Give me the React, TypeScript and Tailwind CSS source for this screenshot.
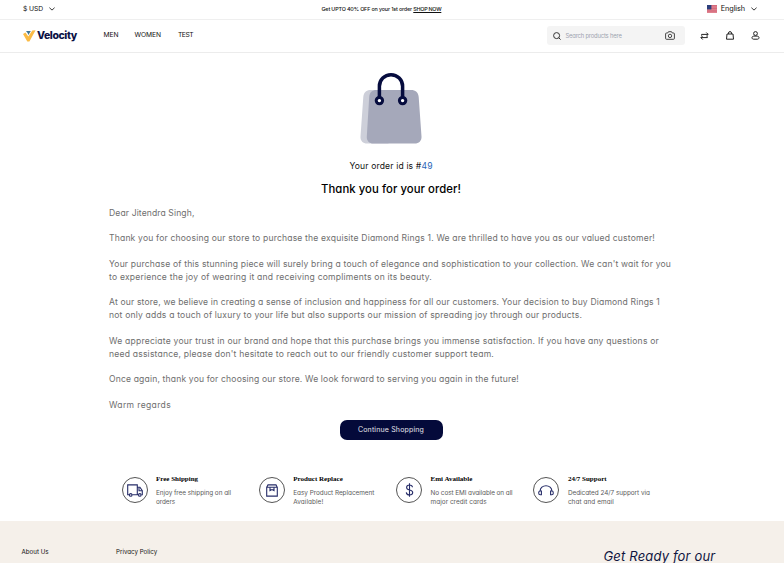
import type { ReactNode } from "react";

const paragraphs: { text: string; tracking: string }[][] = [
  [{ text: "Dear Jitendra Singh,", tracking: "tracking-[0.116px]" }],
  [
    {
      text: "Thank you for choosing our store to purchase the exquisite Diamond Rings 1. We are thrilled to have you as our valued customer!",
      tracking: "tracking-[0.182px]",
    },
  ],
  [
    {
      text: "Your purchase of this stunning piece will surely bring a touch of elegance and sophistication to your collection. We can't wait for you",
      tracking: "tracking-[0.174px]",
    },
    {
      text: "to experience the joy of wearing it and receiving compliments on its beauty.",
      tracking: "tracking-[0.211px]",
    },
  ],
  [
    {
      text: "At our store, we believe in creating a sense of inclusion and happiness for all our customers. Your decision to buy Diamond Rings 1",
      tracking: "tracking-[0.164px]",
    },
    {
      text: "not only adds a touch of luxury to your life but also supports our mission of spreading joy through our products.",
      tracking: "tracking-[0.184px]",
    },
  ],
  [
    {
      text: "We appreciate your trust in our brand and hope that this purchase brings you immense satisfaction. If you have any questions or",
      tracking: "tracking-[0.218px]",
    },
    {
      text: "need assistance, please don't hesitate to reach out to our friendly customer support team.",
      tracking: "tracking-[0.205px]",
    },
  ],
  [
    {
      text: "Once again, thank you for choosing our store. We look forward to serving you again in the future!",
      tracking: "tracking-[0.162px]",
    },
  ],
  [{ text: "Warm regards", tracking: "tracking-[0.34px]" }],
];

function Chevron() {
  return (
    <svg width="6" height="4" viewBox="0 0 6 4" fill="none" stroke="#222" strokeWidth="0.9">
      <path d="M0.4 0.7 3 3.1 5.6 0.7" />
    </svg>
  );
}

function Flag() {
  return (
    <svg width="10" height="8" viewBox="0 0 10 8">
      <rect width="10" height="8" fill="#e3909b" />
      <path d="M0 0.4h10M0 2h10M0 3.6h10M0 5.2h10M0 6.8h10" stroke="#cf5468" strokeWidth="0.7" />
      <rect width="4.4" height="4.4" fill="#2c3f7c" />
    </svg>
  );
}

function Logo() {
  return (
    <svg width="13" height="12" viewBox="0 0 13 12">
      <path d="M0 4 2.500 2.600 5.300 6.400 9.300 0.500 12.600 0.200 6.400 11.600 4.300 11.600Z" fill="#fbbb45" />
      <path d="M3 1.100H7.800L6.600 3.100 5.400 5 4.600 3Z" fill="#3d7496" />
    </svg>
  );
}

function ShoppingBag() {
  return (
    <svg width="62" height="72" viewBox="0 0 62 72" fill="none">
      <path d="M10.500 18h18v53.500H7.200C3 71.500 0.200 68.600 0.500 64.400L3.300 25C3.600 20.500 6.500 18 10.500 18Z" fill="#cdcfd9" />
      <path
        d="M16.500 18h34.600c4.300 0 7.300 2.600 7.600 7l2.800 39.400c.3 4.200-2.600 7.100-6.800 7.100H13.500c-4.200 0-7-2.900-6.700-7.100L9.200 25c.3-4.400 3-7 7.300-7Z"
        fill="#a5a8ba"
      />
      <path d="M19.400 28V14.300a11.600 11.600 0 0 1 23.200 0V28" stroke="#060c3e" strokeWidth="3.500" />
      <circle cx="19.400" cy="28.600" r="3.200" fill="#fff" stroke="#060c3e" strokeWidth="3" />
      <circle cx="42.600" cy="28.600" r="3.200" fill="#fff" stroke="#060c3e" strokeWidth="3" />
    </svg>
  );
}

function TruckIcon() {
  return (
    <svg width="16" height="13" viewBox="0 0 16 13" fill="none" stroke="#262c68" strokeWidth="1.100">
      <path d="M2.200 10.800H0.700V0.900H10.300V10.800H5.200M10.300 3.200h2.600l2.400 3.500v4.100H14.400M10.300 10.800h1" />
      <path d="M12 3.500v3.200h3" />
      <circle cx="3.700" cy="10.900" r="1.300" />
      <circle cx="12.800" cy="10.900" r="1.300" />
    </svg>
  );
}

function BoxIcon() {
  return (
    <svg width="12" height="13" viewBox="0 0 12 13" fill="none" stroke="#262c68" strokeWidth="1.100">
      <path d="M0.700 3.300 2 0.900h8l1.300 2.400v8.800H0.700ZM0.700 3.300h10.600" />
      <path d="M4 3.300v3.200l2-1 2 1V3.300" />
    </svg>
  );
}

function DollarIcon() {
  return (
    <svg width="9" height="14" viewBox="0 0 9 14" fill="none" stroke="#262c68" strokeWidth="1.100">
      <path d="M4.500 0.300v13.400M7.500 4.300C7.300 2.800 6.100 2 4.500 2S1.600 2.900 1.600 4.400C1.600 8 7.700 5.900 7.700 9.500 7.700 11.100 6.300 12 4.500 12S1.400 11.100 1.300 9.400" />
    </svg>
  );
}

function HeadsetIcon() {
  return (
    <svg width="16" height="11" viewBox="0 0 16 11" fill="none" stroke="#262c68" strokeWidth="1.100">
      <path d="M2.200 5.900V5.600a5.800 4.900 0 0 1 11.600 0v.3" />
      <path d="M3.400 9.800V6H2.200C1.200 6 0.700 6.800 0.700 7.900s.5 1.900 1.500 1.900ZM12.600 9.800V6h1.200c1 0 1.500.8 1.500 1.900s-.5 1.900-1.500 1.900Z" />
    </svg>
  );
}

function Feature({ icon, title, lines }: { icon: ReactNode; title: string; lines: ReactNode }) {
  return (
    <div className="flex w-[137.300px] shrink-0 gap-[8.500px] whitespace-nowrap">
      <div className="mt-[2px] flex size-[26px] shrink-0 items-center justify-center rounded-full border border-[#555]">
        {icon}
      </div>
      <div>
        <div className="h-[14px] font-['Liberation_Serif',serif] text-[7px] leading-[8px] font-bold text-black">{title}</div>
        <div className="text-[6.400px] leading-[9px] text-[#5c5c5c]">{lines}</div>
      </div>
    </div>
  );
}

export default function App() {
  return (
    <div className="h-[563px] w-[784px] overflow-hidden bg-white font-['Inter',sans-serif] text-[#111] [font-feature-settings:'cv11']">
      <div className="flex h-[20px] items-center border-b border-[#efefef] pr-[27px] pl-[23px] leading-[10px] whitespace-nowrap">
        <div className="flex w-[298.500px] items-center gap-[6px] pb-[1px] text-[6.800px]">
          <span className="tracking-[-0.120px]">$ USD</span>
          <Chevron />
        </div>
        <div className="grow pb-[1px] text-[5.400px] font-medium tracking-[-0.155px]">
          Get UPTO 40% OFF on your 1st order <span className="tracking-[-0.260px] underline">SHOP NOW</span>
        </div>
        <div className="flex items-center pb-[1px] text-[7.300px]">
          <Flag />
          <span className="mr-[6px] ml-[4px] tracking-[-0.090px]">English</span>
          <Chevron />
        </div>
      </div>

      <div className="flex h-[33px] items-center border-b border-[#ececec] pr-[24px] pb-[1px] pl-[23px] whitespace-nowrap">
        <Logo />
        <span className="ml-[1px] w-[66.500px] text-[10.500px] leading-[12px] font-extrabold tracking-[-0.420px] text-[#0c1144]">Velocity</span>
        <nav className="flex grow pb-[1px] text-[6.700px] leading-[10px]">
          <span className="w-[31px] tracking-[-0.050px]">MEN</span>
          <span className="w-[43.500px] tracking-[-0.080px]">WOMEN</span>
          <span className="tracking-[-0.450px]">TEST</span>
        </nav>
        <div className="mr-[15px] flex h-[19px] w-[138.500px] items-center rounded-[3px] bg-[#f4f4f4] pr-[10px] pl-[6px]">
          <svg width="8" height="8" viewBox="0 0 8 8" fill="none" stroke="#333" strokeWidth="1">
            <circle cx="3.600" cy="3.600" r="3" />
            <path d="m5.700 5.700 1.900 1.900" />
          </svg>
          <span className="ml-[5px] grow text-[5.800px] leading-[8px] tracking-[-0.160px] text-[#9ca3af]">Search products here</span>
          <svg width="10" height="9" viewBox="0 0 10 9" fill="none" stroke="#333" strokeWidth="0.900">
            <path d="M1.500 2h1.200L3.500.700h3L7.300 2h1.200c.6 0 .9.300.9.900v4.500c0 .6-.3.900-.9.900h-7c-.6 0-.9-.3-.9-.9V2.900C.6 2.300.9 2 1.500 2Z" />
            <circle cx="5" cy="4.900" r="1.700" />
          </svg>
        </div>
        <div className="flex w-[60px] items-center justify-between">
          <svg width="9" height="8" viewBox="0 0 9 8" fill="none" stroke="#222" strokeWidth="1">
            <path d="M1.600 3.700V2.400h6.300M6.300.5l1.900 1.900-1.900 1.800M7.400 4.400v1.200H1M2.700 3.900.9 5.700l1.800 1.800" />
          </svg>
          <svg width="8" height="9" viewBox="0 0 8 9" fill="none" stroke="#222" strokeWidth="1">
            <path d="M1 3h6l.5 5.200h-7ZM2.500 3V2.100a1.500 1.500 0 0 1 3 0V3" />
          </svg>
          <svg width="9" height="9" viewBox="0 0 9 9" fill="none" stroke="#222" strokeWidth="1">
            <circle cx="4.500" cy="2.500" r="1.900" />
            <path d="M2.900 5.100h3.200c1.100 0 1.900.7 1.900 1.600s-.7 1.500-1.600 1.500h-3.800C1.700 8.200 1 7.600 1 6.700s.8-1.600 1.900-1.600Z" />
          </svg>
        </div>
      </div>

      <main className="flex h-[468px] flex-col items-center whitespace-nowrap">
        <div className="mt-[19px] mr-[2px] h-[72px]">
          <ShoppingBag />
        </div>
        <div className="mt-[16px] mr-[2px] text-[8.570px] leading-[12px] tracking-[0.157px]">
          Your order id is #<span className="text-[#2a66b8]">49</span>
        </div>
        <h1 className="mt-[9px] mr-[2px] text-[11.300px] leading-[16px] font-medium tracking-[0.077px] text-black">Thank you for your order!</h1>
        <div className="mt-[9.500px] w-[566px] text-[8.570px] leading-[12.850px] text-[#6e6e6e]">
          {paragraphs.map((lines, i) => (
            <div key={i} className="mb-[12.850px] last:mb-0">
              {lines.map((line) => (
                <div key={line.text} className={line.tracking}>
                  {line.text}
                </div>
              ))}
            </div>
          ))}
        </div>
        <button className="mt-[8px] mr-[2px] flex h-[20px] w-[103px] shrink-0 items-center justify-center rounded-[7px] bg-[#040a3a] text-[7px] leading-[10px] tracking-[0.160px] text-[#e4e5ec]">
          Continue Shopping
        </button>
        <div className="mt-[35px] flex self-start pl-[121.500px]">
          <Feature
            icon={<TruckIcon />}
            title="Free Shipping"
            lines={
              <>
                <div className="tracking-[-0.044px]">Enjoy free shipping on all</div>
                <div className="tracking-[-0.090px]">orders</div>
              </>
            }
          />
          <Feature
            icon={<BoxIcon />}
            title="Product Replace"
            lines={
              <>
                <div className="tracking-[-0.027px]">Easy Product Replacement</div>
                <div className="tracking-[0.060px]">Available!</div>
              </>
            }
          />
          <Feature
            icon={<DollarIcon />}
            title="Emi Available"
            lines={
              <>
                <div className="tracking-[-0.072px]">No cost EMI available on all</div>
                <div className="tracking-[0.040px]">major credit cards</div>
              </>
            }
          />
          <Feature
            icon={<HeadsetIcon />}
            title="24/7 Support"
            lines={
              <>
                <div className="tracking-[-0.028px]">Dedicated 24/7 support via</div>
                <div className="tracking-[0.074px]">chat and email</div>
              </>
            }
          />
        </div>
      </main>

      <footer className="flex h-[42px] bg-[#f5f0ea] pt-[26px] pl-[21.500px] text-[6.200px] leading-[10px] whitespace-nowrap">
        <span className="w-[94.500px]">About Us</span>
        <span className="w-[487.500px]">Privacy Policy</span>
        <span className="text-[13px] leading-[18px] tracking-[0.174px] text-[#10153f] italic">Get Ready for our</span>
      </footer>
    </div>
  );
}
